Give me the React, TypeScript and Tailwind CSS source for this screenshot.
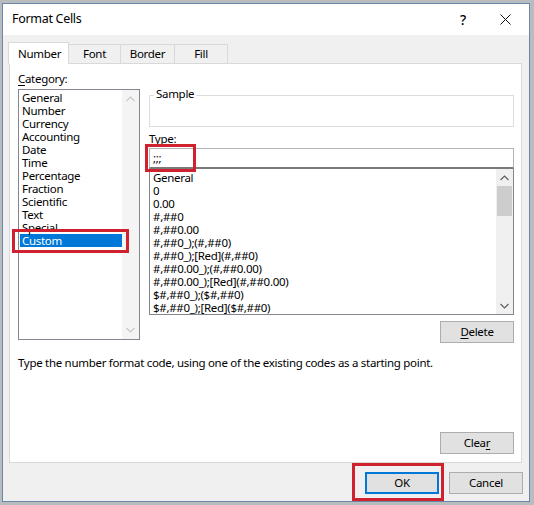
const categories = [
  "General",
  "Number",
  "Currency",
  "Accounting",
  "Date",
  "Time",
  "Percentage",
  "Fraction",
  "Scientific",
  "Text",
  "Special",
  "Custom"
];

const formats = [
  "General",
  "0",
  "0.00",
  "#,##0",
  "#,##0.00",
  "#,##0_);(#,##0)",
  "#,##0_);[Red](#,##0)",
  "#,##0.00_);(#,##0.00)",
  "#,##0.00_);[Red](#,##0.00)",
  "$#,##0_);($#,##0)",
  "$#,##0_);[Red]($#,##0)"
];

const tabs = ["Number", "Font", "Border", "Fill"];

function Chevron({ up, color }: { up?: boolean; color: string }) {
  return (
    <svg width="9" height="6" viewBox="0 0 9 6" fill="none">
      <path
        d={up ? "M0.5 5L4.5 1L8.5 5" : "M0.5 1L4.5 5L8.5 1"}
        stroke={color}
        strokeWidth="1.2"
      />
    </svg>
  );
}

function Button({
  children,
  primary
}: {
  children: React.ReactNode;
  primary?: boolean;
}) {
  return (
    <div
      className={`flex h-[22px] w-[74px] items-center justify-center bg-[#e1e1e1] text-black ${
        primary ? "border-2 border-[#0078d7]" : "border border-[#adadad]"
      }`}
    >
      {children}
    </div>
  );
}

export default function App() {
  return (
    <div
      className="h-[505px] w-[534px] overflow-hidden bg-[#b9bcbf] pl-[2px] pt-[3px] text-[11.5px] tracking-[-0.3px]"
      style={{ fontFamily: '"Noto Sans", "Open Sans", sans-serif' }}
    >
      <div className="flex h-[499px] w-[528px] flex-col border border-[#6b87a8] bg-[#f0f0f0]">
        {/* title bar */}
        <div className="flex h-[31px] items-center bg-white pl-[9px] pr-[18px]">
          <span className="text-[12.5px] text-black">Format Cells</span>
          <span className="ml-auto mr-[34px] text-[14px] font-medium text-black">?</span>
          <svg width="11" height="11" viewBox="0 0 11 11">
            <path d="M0.5 0.5L10.5 10.5M10.5 0.5L0.5 10.5" stroke="#111" strokeWidth="1" />
          </svg>
        </div>

        {/* tabs */}
        <div className="mt-[7px] flex h-[21px] items-end pl-[5px]">
          {tabs.map((t, i) =>
            i === 0 ? (
              <div
                key={t}
                className="relative z-10 -mb-px flex h-[22px] w-[61px] items-center border border-b-0 border-[#d9d9d9] bg-white pl-[9px] text-black"
              >
                {t}
              </div>
            ) : (
              <div
                key={t}
                className={`flex h-[19px] items-center justify-center border border-l-0 border-b-0 border-[#d9d9d9] bg-[#f0f0f0] text-black ${
                  t === "Font" ? "w-[52px]" : t === "Border" ? "w-[54px]" : "w-[53px]"
                }`}
              >
                {t}
              </div>
            )
          )}
        </div>

        {/* panel */}
        <div className="ml-[6px] flex h-[400px] w-[513px] flex-col border border-[#d9d9d9] bg-white pb-[8px] pl-[8px] pr-[7px] pt-[8px] text-black">
          <div className="flex gap-[9px]">
            {/* category */}
            <div className="w-[122px]">
              <div className="mb-[3px] h-[14px] leading-[14px]">
                <span className="underline underline-offset-2">C</span>ategory:
              </div>
              <div className="relative flex h-[251px] border border-[#828790]">
                <div className="flex-1 pt-[1px]">
                  {categories.map((c) => (
                    <div
                      key={c}
                      className={`h-[13px] leading-[13px] ${
                        c === "Custom" ? "ml-[1px] bg-[#0078d7] pl-[2px] text-white" : "pl-[3px]"
                      }`}
                    >
                      {c}
                    </div>
                  ))}
                </div>
                <div className="flex w-[17px] flex-col items-center justify-between bg-[#f4f4f4] py-[6px]">
                  <Chevron up color="#c8c8c8" />
                  <Chevron color="#c8c8c8" />
                </div>
                <div className="absolute left-[-7px] top-[139px] h-[24px] w-[117px] border-[3px] border-[#d0212f]" />
              </div>
            </div>

            {/* right side */}
            <div className="flex-1">
              <div className="relative mt-[23px] h-[32px] border border-[#dcdcdc]">
                <span className="absolute left-[4px] top-[-9px] bg-white px-[2px] leading-[14px]">
                  Sample
                </span>
              </div>
              <div className="mt-[5px] h-[14px] leading-[14px]">Type:</div>
              <div className="relative mt-[2px] flex h-[21px] items-center border border-b-2 border-[#b4b4b4] border-b-[#7a7a7a] pl-[3px]">
                ;;;
                <div className="absolute left-[-5px] top-[-5px] h-[28px] w-[51px] border-[3px] border-[#d0212f]" />
              </div>
              <div className="flex h-[146px] border border-t-0 border-[#828790]">
                <div className="flex-1 pl-[3px] pt-[2px]">
                  {formats.map((f) => (
                    <div key={f} className="h-[13px] whitespace-nowrap leading-[13px]">
                      {f}
                    </div>
                  ))}
                </div>
                <div className="flex w-[17px] flex-col items-center bg-[#f0f0f0]">
                  <div className="flex h-[17px] items-center">
                    <Chevron up color="#606060" />
                  </div>
                  <div className="h-[30px] w-[15px] bg-[#cdcdcd]" />
                  <div className="mt-auto flex h-[17px] items-center">
                    <Chevron color="#606060" />
                  </div>
                </div>
              </div>
              <div className="mt-[6px] flex justify-end">
                <Button>
                  <span className="underline underline-offset-2">D</span>elete
                </Button>
              </div>
            </div>
          </div>

          <div className="mt-[13px] h-[14px] leading-[14px]">
            Type the number format code, using one of the existing codes as a starting point.
          </div>

          <div className="mt-auto flex justify-end">
            <Button>
              Clea<span className="underline underline-offset-2">r</span>
            </Button>
          </div>
        </div>

        {/* footer buttons */}
        <div className="mt-[9px] flex justify-end gap-[10px] pr-[6px]">
          <div className="relative">
            <Button primary>OK</Button>
            <div className="absolute left-[-13px] top-[-9px] h-[38px] w-[92px] border-[3px] border-[#d0212f]" />
          </div>
          <Button>Cancel</Button>
        </div>
      </div>
    </div>
  );
}
